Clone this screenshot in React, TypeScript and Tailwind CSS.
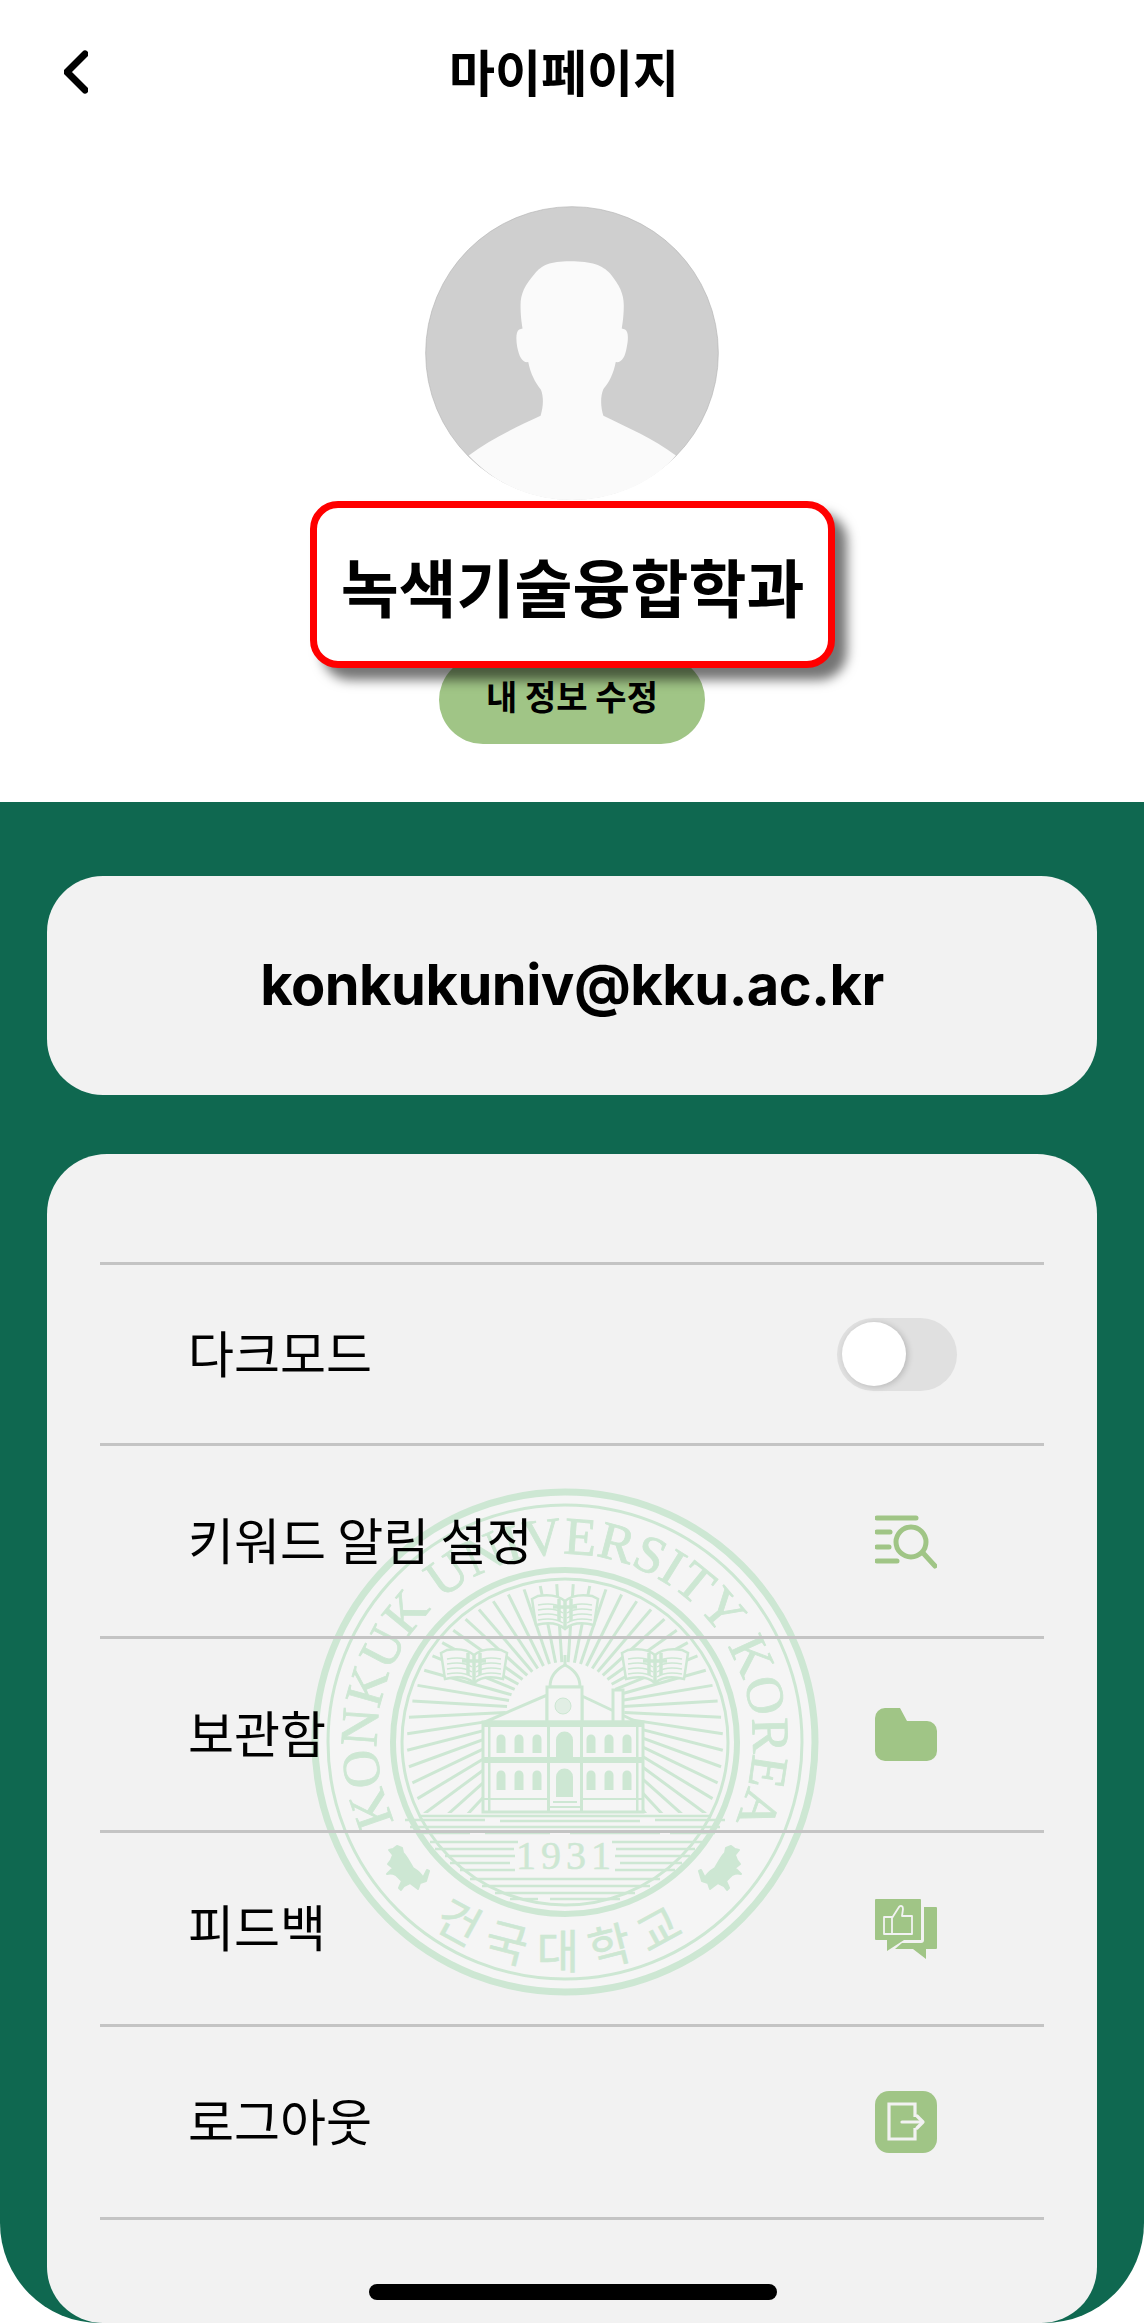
import type { ReactNode } from "react";

const kr = "font-['Noto_Sans_CJK_KR','Noto_Sans',sans-serif]";

const SEAL = "#cde7d3";
const ICON = "#a0c586";

function BackIcon() {
  return (
    <svg width="24" height="44" viewBox="0 0 24 44" fill="none" stroke="#000" strokeWidth="7" strokeLinecap="round" strokeLinejoin="round">
      <path d="M21 4 L3 22 L21 40" />
    </svg>
  );
}

function Avatar() {
  return (
    <svg width="294" height="294" viewBox="46 48 880 880" className="block">
      <circle cx="486" cy="488" r="438" fill="#cfcfcf" stroke="#b5b5b5" strokeWidth="2" />
      <path
        d="M480 213 C420 213 395 225 375 250 C345 285 332 310 332 345 C332 375 335 395 338 415 L328 418 C318 425 318 445 322 470 C328 500 338 518 355 515 C362 550 375 575 393 598 C402 620 400 650 392 676 C320 710 240 745 177 795 C260 885 370 928 486 928 C600 928 720 885 797 795 C730 745 650 710 580 676 C572 650 570 620 580 596 C598 575 610 550 617 515 C635 518 645 500 650 470 C655 445 655 425 645 418 L635 415 C638 395 641 375 641 345 C641 310 628 285 600 250 C578 225 545 213 480 213 Z"
        fill="#fafafa"
      />
    </svg>
  );
}

function SearchListIcon() {
  return (
    <svg width="62" height="62" viewBox="0 0 62 62" fill="none" stroke={ICON} strokeWidth="5" strokeLinecap="round">
      <path d="M2 8 H41" />
      <path d="M2 22 H15" />
      <path d="M2 37 H14" />
      <path d="M2 51 H22" />
      <circle cx="36" cy="32" r="15" />
      <path d="M49 44 L60 56" />
    </svg>
  );
}

function FolderIcon() {
  return (
    <svg width="62" height="53" viewBox="0 0 62 53" fill={ICON}>
      <path d="M10 0 H25 L32 13 H52 a10 10 0 0 1 10 10 V43 a10 10 0 0 1 -10 10 H10 a10 10 0 0 1 -10 -10 V10 a10 10 0 0 1 10 -10 Z" />
    </svg>
  );
}

function FeedbackIcon() {
  return (
    <svg width="62" height="60" viewBox="0 0 62 60">
      <path d="M1 0 H45 a1 1 0 0 1 1 1 V41 H29 L12 52 V41 H1 a1 1 0 0 1 -1 -1 V1 a1 1 0 0 1 1 -1 Z" fill={ICON} />
      <path d="M49 8 H61 a1 1 0 0 1 1 1 V49 a1 1 0 0 1 -1 1 H51 V60 L38 50 H20 L27 44 H46 C48 44 49 43 49 41 Z" fill={ICON} />
      <path d="M9 18 H17 V35 H9 Z M17 19 L24 8 C26 6 28 7 28 10 L27 17 H37 V35 H17" fill="none" stroke="#f2f2f2" strokeWidth="1.8" strokeLinejoin="round" />
    </svg>
  );
}

function LogoutIcon() {
  return (
    <svg width="62" height="62" viewBox="0 0 62 62" fill="none">
      <rect width="62" height="62" rx="14" fill={ICON} />
      <path d="M40 26 V13 H14 V48 H40 V37" stroke="#f2f2f2" strokeWidth="3.2" />
      <path d="M27 31 H47" stroke="#f2f2f2" strokeWidth="3.2" strokeLinecap="round" />
      <path d="M42 25 L48 31 L42 37" stroke="#f2f2f2" strokeWidth="3.2" strokeLinecap="round" strokeLinejoin="round" />
    </svg>
  );
}

function Toggle() {
  return (
    <div className="-mr-[20px] w-[120px] h-[73px] rounded-full bg-[#e0e0e0] flex items-center pl-[5px]">
      <div className="w-[64px] h-[64px] rounded-full bg-white shadow-[2px_1px_6px_rgba(0,0,0,0.18)]" />
    </div>
  );
}

function Book({ x, y }: { x: number; y: number }) {
  return (
    <g transform={`translate(${x} ${y})`} fill="none" stroke={SEAL} strokeWidth="2.5">
      <path d="M-33 -14 L-27 -17 C-15 -19 -6 -17 0 -12 C6 -17 15 -19 27 -17 L33 -14 L29 12 C17 9 7 10 0 16 C-7 10 -17 9 -29 12 Z" fill="#f5f5f5" />
      {[-8, -3, 2, 7].map((d) => (
        <g key={d} strokeWidth="1.5">
          <path d={`M-27 ${d} C-17 ${d - 2} -8 ${d - 1} -2 ${d + 3}`} />
          <path d={`M27 ${d} C17 ${d - 2} 8 ${d - 1} 2 ${d + 3}`} />
        </g>
      ))}
      <path d="M0 -12 V16 M-6 -14 V8 M6 -14 V8 M-12 -6 H12" strokeWidth="3.5" />
    </g>
  );
}

function Bull({ x, y, flip }: { x: number; y: number; flip?: boolean }) {
  return (
    <g transform={`translate(${x} ${y}) scale(${flip ? -1 : 1} 1)`} fill={SEAL} stroke={SEAL} strokeWidth="2" strokeLinejoin="round">
      <path d="M-8 -22 L-3 -20 L-2 -15 C3 -10 5 -4 8 0 C13 3 17 7 18 10 L22 2 L24 3 L21 13 L15 15 L13 21 L9 18 L5 15 L-1 18 L-4 22 L-6 20 L-3 13 L-9 7 C-13 5 -15 5 -18 6 L-12 0 L-17 -4 L-14 -8 L-12 -13 L-16 -18 L-12 -19 Z" />
    </g>
  );
}

// 건국대학교 seal, sits under the list rows
function Seal() {
  const rays = Array.from({ length: 60 }, (_, i) => i * 6 + 3);
  const windowsX = [191, 209, 227, 281, 299, 317];
  const water: [number, number, number][] = [
    [110, 400, 329], [95, 175, 333], [190, 330, 334], [345, 415, 333], [100, 410, 340], [110, 160, 346], [175, 240, 346],
    [260, 350, 346], [360, 405, 346], [120, 208, 355], [302, 392, 355], [125, 204, 362], [306, 385, 362], [135, 205, 369],
    [305, 380, 369], [140, 200, 376], [310, 372, 376], [150, 205, 383], [305, 365, 383], [160, 350, 392], [172, 340, 399],
    [185, 325, 406], [200, 228, 412], [240, 310, 412],
  ];
  return (
    <svg width="510" height="510" viewBox="0 0 510 510" className="block">
      <defs>
        <clipPath id="sky">
          <rect x="0" y="0" width="510" height="326" />
        </clipPath>
        <path id="top-arc" d="M101 362.8 A188 188 0 1 1 409 362.8" />
        <path id="bottom-arc" d="M95.2 414.8 A226 226 0 0 0 414.8 414.8" />
      </defs>
      <circle cx="255" cy="255" r="250" fill="#f5f5f5" stroke={SEAL} strokeWidth="7" />
      <circle cx="255" cy="255" r="237" fill="none" stroke={SEAL} strokeWidth="3" />
      <circle cx="255" cy="255" r="172" fill="none" stroke={SEAL} strokeWidth="6" />
      <circle cx="255" cy="255" r="163" fill="none" stroke={SEAL} strokeWidth="3" />

      <text fill={SEAL} stroke={SEAL} strokeWidth="0.8" fontSize="53" fontFamily="'Liberation Serif',serif">
        <textPath href="#top-arc" startOffset="50%" textAnchor="middle">
          KONKUK UNIVERSITY KOREA
        </textPath>
      </text>
      <text fill={SEAL} stroke={SEAL} strokeWidth="0.6" fontSize="46" fontFamily="'Noto Sans CJK KR',sans-serif" letterSpacing="14">
        <textPath href="#bottom-arc" startOffset="50%" textAnchor="middle">
          건국대학교
        </textPath>
      </text>

      <g clipPath="url(#sky)" stroke={SEAL} strokeWidth="3">
        {rays.map((deg) => {
          const a = (deg * Math.PI) / 180;
          return (
            <line
              key={deg}
              x1={255 + 60 * Math.cos(a)}
              y1={235 + 60 * Math.sin(a)}
              x2={255 + 158 * Math.cos(a)}
              y2={255 + 158 * Math.sin(a)}
            />
          );
        })}
      </g>

      <Book x={255} y={126} />
      <Book x={164} y={180} />
      <Book x={345} y={180} />

      {/* building */}
      <g stroke={SEAL} strokeWidth="3" fill="#f5f5f5">
        <path d="M175 235 L237 208 V235 Z" />
        <path d="M272 209 L327 235 H272 Z" />
        <rect x="303" y="203" width="10" height="32" />
        <path d="M240 200 C240 188 247 182 255 178 C263 182 270 188 270 200 Z" />
        <path d="M255 178 V168" fill="none" />
        <rect x="237" y="200" width="35" height="35" />
        <circle cx="253" cy="219" r="8" fill={SEAL} fillOpacity="0.5" strokeWidth="1" />
        <rect x="173" y="235" width="160" height="90" />
      </g>
      <g fill={SEAL}>
        <rect x="173" y="235" width="160" height="5" />
        <rect x="173" y="270" width="160" height="6" />
        <rect x="173" y="311" width="64" height="2" />
        <rect x="272" y="311" width="61" height="2" />
        <rect x="178" y="240" width="2.5" height="85" />
        <rect x="326" y="240" width="2.5" height="85" />
        <rect x="237" y="240" width="3" height="85" />
        <rect x="270" y="240" width="3" height="85" />
        {windowsX.map((x) => (
          <g key={x}>
            <path d={`M${x - 4.5} 266 V252 a4.5 4.5 0 0 1 9 0 V266 Z`} />
            <path d={`M${x - 4.5} 303 V288 a4.5 4.5 0 0 1 9 0 V303 Z`} />
          </g>
        ))}
        <path d="M246 271 V253 a8.5 8.5 0 0 1 17 0 V271 Z" />
        <path d="M246 310 V290 a8.5 8.5 0 0 1 17 0 V310 Z" />
        <rect x="243" y="314" width="24" height="2" />
        <rect x="240" y="319" width="30" height="2" />
      </g>

      <g stroke={SEAL} strokeWidth="2.4">
        {water.map(([x1, x2, y]) => (
          <line key={`${x1}-${y}`} x1={x1} x2={x2} y1={y} y2={y} />
        ))}
      </g>
      <rect x="210" y="350" width="92" height="36" fill="#f5f5f5" />
      <text x="256" y="382" textAnchor="middle" fill={SEAL} stroke={SEAL} strokeWidth="0.5" fontSize="40" letterSpacing="5" fontFamily="'Liberation Serif',serif">
        1931
      </text>

      <Bull x={95} y={381} />
      <Bull x={413} y={381} flip />
    </svg>
  );
}

type Row = { label: string; height: string; right: ReactNode };

const rows: Row[] = [
  { label: "다크모드", height: "h-[181px]", right: <Toggle /> },
  { label: "키워드 알림 설정", height: "h-[193px]", right: <SearchListIcon /> },
  { label: "보관함", height: "h-[194px]", right: <FolderIcon /> },
  { label: "피드백", height: "h-[194px]", right: <FeedbackIcon /> },
  { label: "로그아웃", height: "h-[193px]", right: <LogoutIcon /> },
];

export default function App() {
  return (
    <div className={`w-[1144px] h-[2323px] bg-white flex flex-col overflow-hidden text-black ${kr}`}>
      {/* top */}
      <div className="h-[802px] shrink-0 flex flex-col items-center">
        <div className="w-full h-[144px] flex items-center pl-[64px]">
          <BackIcon />
          <h1 className="ml-[361px] mb-[5px] text-[50px] leading-none font-bold">마이페이지</h1>
        </div>
        <div className="mt-[62px]">
          <Avatar />
        </div>
        <div className="relative z-10 mt-[1px] ml-[1px] w-[525px] h-[167px] rounded-[28px] border-[7px] border-[#ff0000] bg-white flex items-center justify-center shadow-[12px_12px_12px_rgba(0,0,0,0.55)]">
          <span className="text-[63px] leading-none font-bold whitespace-nowrap">녹색기술융합학과</span>
        </div>
        <button className="-mt-[12px] w-[266px] h-[88px] pb-[8px] rounded-full bg-[#a0c586] flex items-center justify-center text-[34px] leading-none font-bold">
          내 정보 수정
        </button>
      </div>

      {/* green area */}
      <div className="flex-1 bg-[#0f6850] rounded-b-[100px] px-[47px] pt-[74px] flex flex-col overflow-hidden">
        <div className="h-[219px] shrink-0 pb-[2px] rounded-[56px] bg-[#f2f2f2] flex items-center justify-center">
          <span className="font-['Inter',sans-serif] text-[56px] leading-none font-bold tracking-[-0.5px]">konkukuniv@kku.ac.kr</span>
        </div>

        <div className="relative mt-[59px] flex-1 rounded-t-[60px] rounded-b-[56px] bg-[#f2f2f2] px-[53px] pt-[108px] overflow-hidden">
          <div className="absolute left-[263px] top-[333px]">
            <Seal />
          </div>
          <div className="relative border-b-[3px] border-[#c4c4c4]">
            {rows.map((row) => (
              <div key={row.label} className={`${row.height} border-t-[3px] border-[#c4c4c4] flex items-center justify-between pl-[88px] pr-[107px]`}>
                <span className="mb-[7px] text-[50px] leading-none">{row.label}</span>
                <div className="flex justify-end">{row.right}</div>
              </div>
            ))}
          </div>
          {/* home indicator */}
          <div className="absolute left-[322px] bottom-[23px] w-[408px] h-[16px] rounded-full bg-black" />
        </div>
      </div>
    </div>
  );
}
